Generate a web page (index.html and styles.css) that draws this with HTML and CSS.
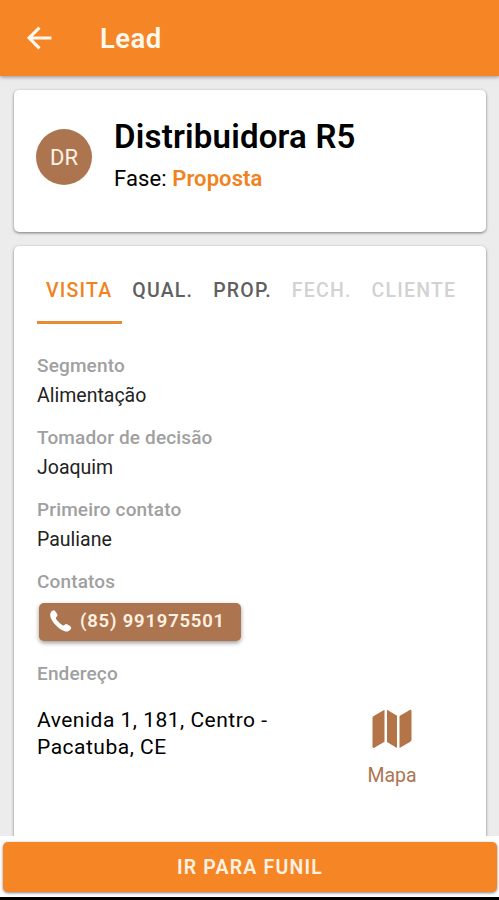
FILE: index.html
```html
<!DOCTYPE html>
<html lang="pt-BR">
    <head>
        <meta charset="utf-8">
        <title>Lead</title>
        <link rel="stylesheet" href="styles.css">
    </head>
    <body>
        <header class="toolbar">
            <svg class="back" viewBox="0 0 24 24"><path d="M23.500 11.500H2.500M12 1.500L2 11.500l10 10"/></svg>
            <h1 class="toolbar_title">Lead</h1>
        </header>

        <main class="content">
            <section class="card lead">
                <div class="avatar">DR</div>
                <div>
                    <h2 class="lead_name">Distribuidora R5</h2>
                    <p class="lead_phase">Fase: <b>Proposta</b></p>
                </div>
            </section>

            <section class="card details">
                <nav class="tabs">
                    <a class="tab active">VISITA</a>
                    <a class="tab">QUAL.</a>
                    <a class="tab">PROP.</a>
                    <a class="tab disabled">FECH.</a>
                    <a class="tab disabled">CLIENTE</a>
                </nav>

                <dl class="fields">
                    <dt>Segmento</dt>
                    <dd>Alimentação</dd>
                    <dt>Tomador de decisão</dt>
                    <dd>Joaquim</dd>
                    <dt>Primeiro contato</dt>
                    <dd>Pauliane</dd>
                    <dt>Contatos</dt>
                </dl>
                <button class="phone">
                    <svg viewBox="0 0 22 22"><path d="M1 3.2C1.6 1.6 3 .3 4.4.3c1 0 3.4 3.6 3.6 4.8.2 1.1-1.7 2-1.7 3 0 1.7 5.8 7.4 7.5 7.5 1 0 1.9-1.8 3-1.7 1.2.2 5 2.6 5 3.6 0 1.5-1.5 3-3.2 3.7C12.5 23.3-1.6 9.4 1 3.2z"/></svg>
                    <span>(85) 991975501</span>
                </button>

                <p class="label">Endereço</p>
                <div class="address">
                    <p class="address_text">Avenida 1, 181, Centro - Pacatuba, CE</p>
                    <a class="map">
                        <svg viewBox="0 0 40 40"><path d="M12.5.8v32L2.3 38.8Q.5 39.5.5 37.5V9Q.5 7.700 1.700 7zM15 .8l10 6v32.100l-10-6zM27.500 7L37.700 1Q39.500.2 39.500 2.300v28.300q0 1.400-1.200 2.100l-10.800 6.200z"/></svg>
                        <span>Mapa</span>
                    </a>
                </div>
            </section>
        </main>

        <footer class="footer">
            <button class="funnel">IR PARA FUNIL</button>
        </footer>
    </body>
</html>
```
FILE: styles.css
```css
* {
    box-sizing: border-box;
}
body {
    margin: 0;
    height: 900px;
    display: flex;
    flex-direction: column;
    overflow: hidden;
    background: #ececec;
    color: #000;
    font-family: Roboto, "Liberation Sans", sans-serif;
}
h1, h2, p, dl, dd {
    margin: 0;
}
button {
    border: 0;
    padding: 0;
    color: #fff2e2;
    font-family: inherit;
    font-weight: 600;
}

.toolbar {
    height: 76px;
    flex: none;
    display: flex;
    align-items: center;
    padding-left: 27px;
    background: #f58525;
    color: #fff8ee;
    box-shadow: 0 1px 4px rgba(0, 0, 0, 0.4);
}
.back {
    width: 25px;
    height: 25px;
    fill: none;
    stroke: #fff8ee;
    stroke-width: 3;
}
.toolbar_title {
    margin-left: 48px;
    font-size: 27.5px;
    font-weight: 600;
    letter-spacing: 0.4px;
}

.content {
    flex: 1;
    min-height: 0;
    overflow: hidden;
    display: flex;
    flex-direction: column;
    gap: 14px;
    padding: 14px 13px 0 14px;
}
.card {
    background: #fff;
    border-radius: 5px;
    box-shadow: 0 1px 3px rgba(0, 0, 0, 0.5);
}

.lead {
    height: 142px;
    flex: none;
    display: flex;
    padding: 27px 22px;
}
.avatar {
    width: 56px;
    height: 56px;
    margin: 12px 22px 0 0;
    border-radius: 50%;
    background: #ad754f;
    color: #fff2e6;
    font-size: 22px;
    line-height: 57px;
    text-align: center;
}
.lead_name {
    font-size: 33px;
    line-height: 40px;
    font-weight: 600;
    letter-spacing: 0.2px;
}
.lead_phase {
    margin-top: 9px;
    font-size: 22px;
    line-height: 26px;
    letter-spacing: 0.1px;
}
.lead_phase b {
    color: #f0831e;
    font-weight: 600;
}

.details {
    flex: none;
    height: 620px;
    padding: 12px 23px;
}
.tabs {
    display: flex;
    height: 66px;
    color: #606060;
}
.tab {
    padding: 0 10px;
    font-size: 19.5px;
    font-weight: 500;
    line-height: 65px;
    letter-spacing: 1.2px;
    white-space: nowrap;
}
.active {
    width: 86px;
    padding-left: 9px;
    color: #f0831e;
    border-bottom: 3px solid #e58a35;
}
.disabled {
    color: #d2d2d2;
}

.fields {
    margin-top: 29px;
}
.fields dt, .label {
    color: #a0a0a0;
    font-size: 19px;
    font-weight: 500;
    line-height: 26px;
    letter-spacing: 0.15px;
}
.fields dd {
    margin: 3px 0 16px;
    color: #222;
    font-size: 19.5px;
    line-height: 27px;
}
.phone {
    display: flex;
    align-items: center;
    width: 202px;
    height: 38px;
    margin: 8px 0 20px 2px;
    padding: 0 0 2px 10px;
    border-radius: 5px;
    background: #ad754f;
    box-shadow: 0 2px 4px rgba(0, 0, 0, 0.4);
    font-size: 18.5px;
    letter-spacing: 0.8px;
    white-space: nowrap;
}
.phone svg {
    width: 23px;
    height: 22px;
    margin-right: 8px;
    fill: #fff;
}
.address {
    display: flex;
    justify-content: space-between;
    margin-top: 20px;
}
.address_text {
    width: 250px;
    font-size: 21px;
    line-height: 27px;
    letter-spacing: 0.5px;
}
.map {
    width: 60px;
    margin: 2px 41px 0 0;
    display: flex;
    flex-direction: column;
    align-items: center;
    color: #ad754f;
    font-size: 19.5px;
    line-height: 26px;
}
.map svg {
    width: 40px;
    height: 40px;
    margin-bottom: 14px;
    fill: #b37448;
}

.footer {
    flex: none;
    height: 64px;
    padding: 6px 2px 0 3px;
    background: #fff;
    border-bottom: 3px solid #000;
}
.funnel {
    display: block;
    width: 100%;
    height: 50px;
    border-radius: 5px;
    background: #f58525;
    box-shadow: 0 1px 3px rgba(0, 0, 0, 0.5);
    font-size: 19.5px;
    letter-spacing: 1.2px;
}
```
